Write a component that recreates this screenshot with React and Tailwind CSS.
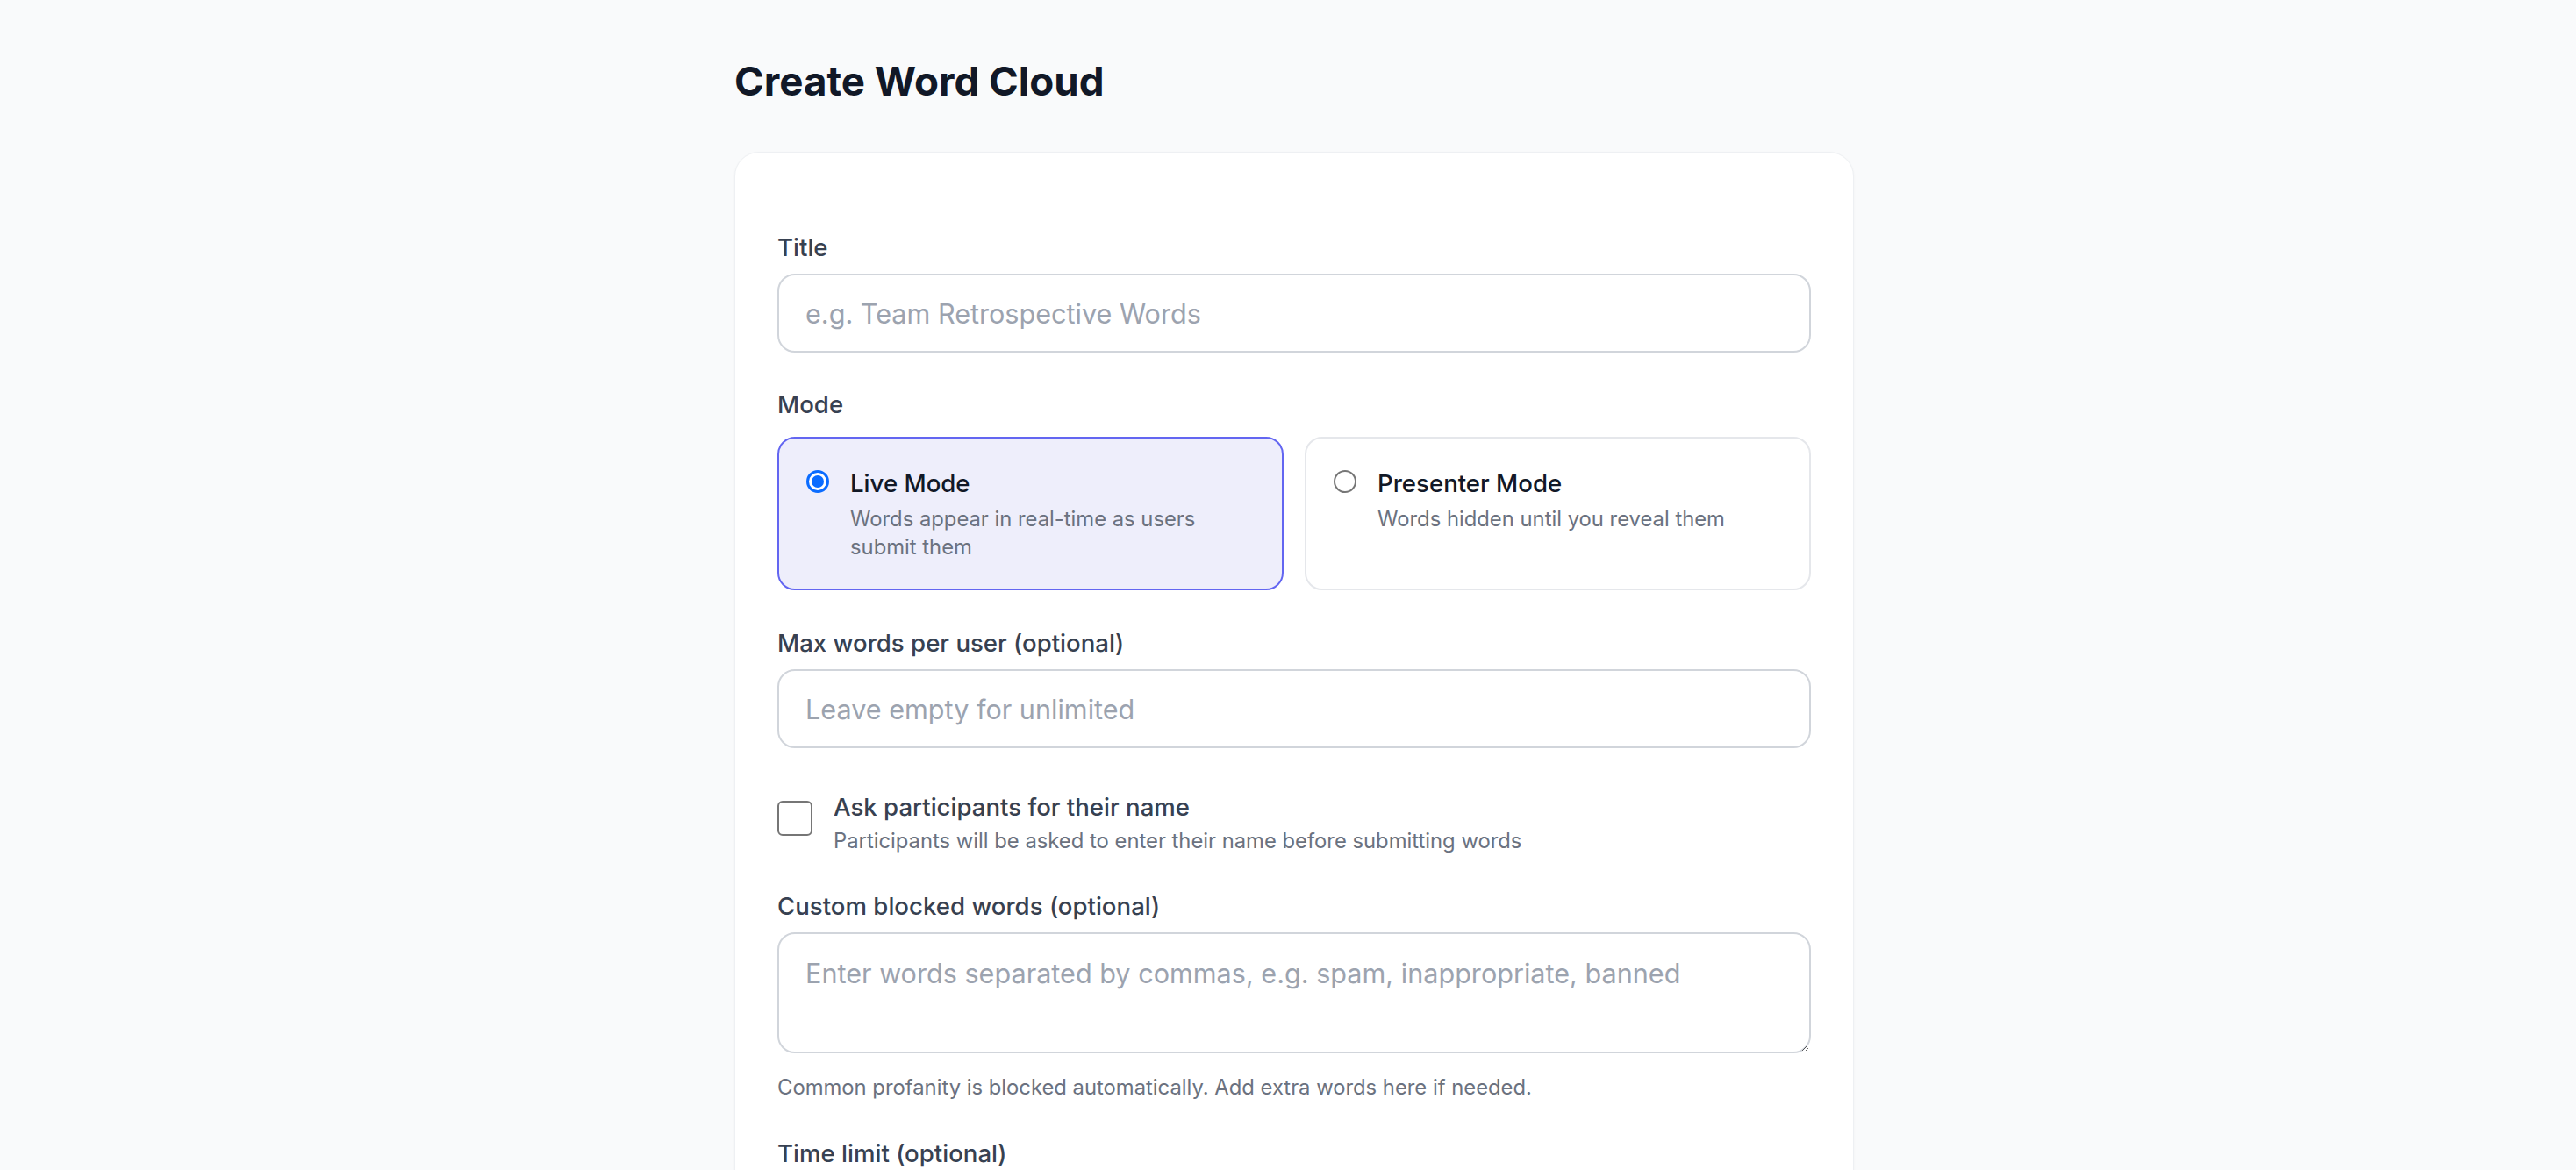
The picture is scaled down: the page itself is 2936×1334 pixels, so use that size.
// Word cloud creation form
function FieldLabel({ children, className = "" }) {
  return (
    <label className={`block text-[27.6px] leading-[38px] font-medium text-[#374151] ${className}`}>
      {children}
    </label>
  );
}

function TextInput({ placeholder, className = "" }) {
  return (
    <input
      type="text"
      placeholder={placeholder}
      className={`block h-[90px] w-full rounded-[20px] border-2 border-[#d1d5db] bg-white px-[30px] text-[30.6px] text-[#111827] outline-none placeholder:text-[#9ca3af] ${className}`}
    />
  );
}

function ModeOption({ title, description, selected }) {
  return (
    <label
      className={`flex items-start gap-[24px] rounded-[20px] border-2 px-[31px] pt-[32px] pb-[31px] ${
        selected ? "border-[#6366f1] bg-[#eeeefb]" : "border-[#e5e7eb] bg-white"
      }`}
    >
      {selected ? (
        <span className="mt-[4px] flex h-[26px] w-[26px] shrink-0 items-center justify-center rounded-full border-[3px] border-[#0b6cff] bg-white">
          <span className="h-[14px] w-[14px] rounded-full bg-[#0b6cff]" />
        </span>
      ) : (
        <span className="mt-[4px] h-[26px] w-[26px] shrink-0 rounded-full border-2 border-[#767676] bg-white" />
      )}
      <span className="flex flex-col">
        <span className="text-[27.6px] leading-[38px] font-medium text-[#111827]">{title}</span>
        <span className="mt-[6px] text-[23.8px] leading-[32px] text-[#6b7280]">{description}</span>
      </span>
    </label>
  );
}

export default function App() {
  return (
    <div className="min-h-screen bg-[#f9fafb] font-['Inter','Noto_Sans',sans-serif] text-[#111827]">
      <div className="ml-[837px] w-[1276px] pt-[65px] pb-[120px]">
        <h1 className="text-[45.7px] leading-[56px] font-bold text-[#111827]">Create Word Cloud</h1>

        <form className="mt-[52px] flex flex-col rounded-[28px] border border-[#eef0f3] bg-white px-[48px] pt-[89px] pb-[60px] shadow-[0_1px_3px_rgba(0,0,0,0.04)]">
          <FieldLabel>Title</FieldLabel>
          <TextInput className="mt-[11px]" placeholder="e.g. Team Retrospective Words" />

          <FieldLabel className="mt-[40px]">Mode</FieldLabel>
          <div className="mt-[18px] grid grid-cols-2 gap-[24px]">
            <ModeOption
              selected
              title="Live Mode"
              description="Words appear in real-time as users submit them"
            />
            <ModeOption title="Presenter Mode" description="Words hidden until you reveal them" />
          </div>

          <FieldLabel className="mt-[41px]">Max words per user (optional)</FieldLabel>
          <TextInput className="mt-[11px]" placeholder="Leave empty for unlimited" />

          <label className="mt-[48px] flex items-start gap-[24px]">
            <span className="mt-[12px] h-[40px] w-[40px] shrink-0 rounded-[6px] border-2 border-[#767676] bg-white" />
            <span className="flex flex-col">
              <span className="text-[27.6px] leading-[38px] font-medium text-[#374151]">
                Ask participants for their name
              </span>
              <span className="mt-[5px] text-[23.8px] leading-[30.4px] text-[#6b7280]">
                Participants will be asked to enter their name before submitting words
              </span>
            </span>
          </label>

          <FieldLabel className="mt-[40px]">Custom blocked words (optional)</FieldLabel>
          <textarea
            placeholder="Enter words separated by commas, e.g. spam, inappropriate, banned"
            className="mt-[11px] block h-[138px] w-full resize-y rounded-[20px] border-2 border-[#d1d5db] bg-white px-[30px] pt-[22px] text-[30.6px] leading-[45.6px] text-[#111827] outline-none placeholder:text-[#9ca3af]"
          />
          <p className="mt-[24px] text-[23.8px] leading-[30.4px] text-[#6b7280]">
            Common profanity is blocked automatically. Add extra words here if needed.
          </p>

          <FieldLabel className="mt-[40px]">Time limit (optional)</FieldLabel>
          <TextInput className="mt-[11px]" placeholder="Minutes, leave empty for no limit" />

          <button
            type="button"
            className="mt-[46px] h-[90px] w-full rounded-[20px] bg-[#4f46e5] text-[30.4px] font-semibold text-white"
          >
            Create Word Cloud
          </button>
        </form>
      </div>
    </div>
  );
}
